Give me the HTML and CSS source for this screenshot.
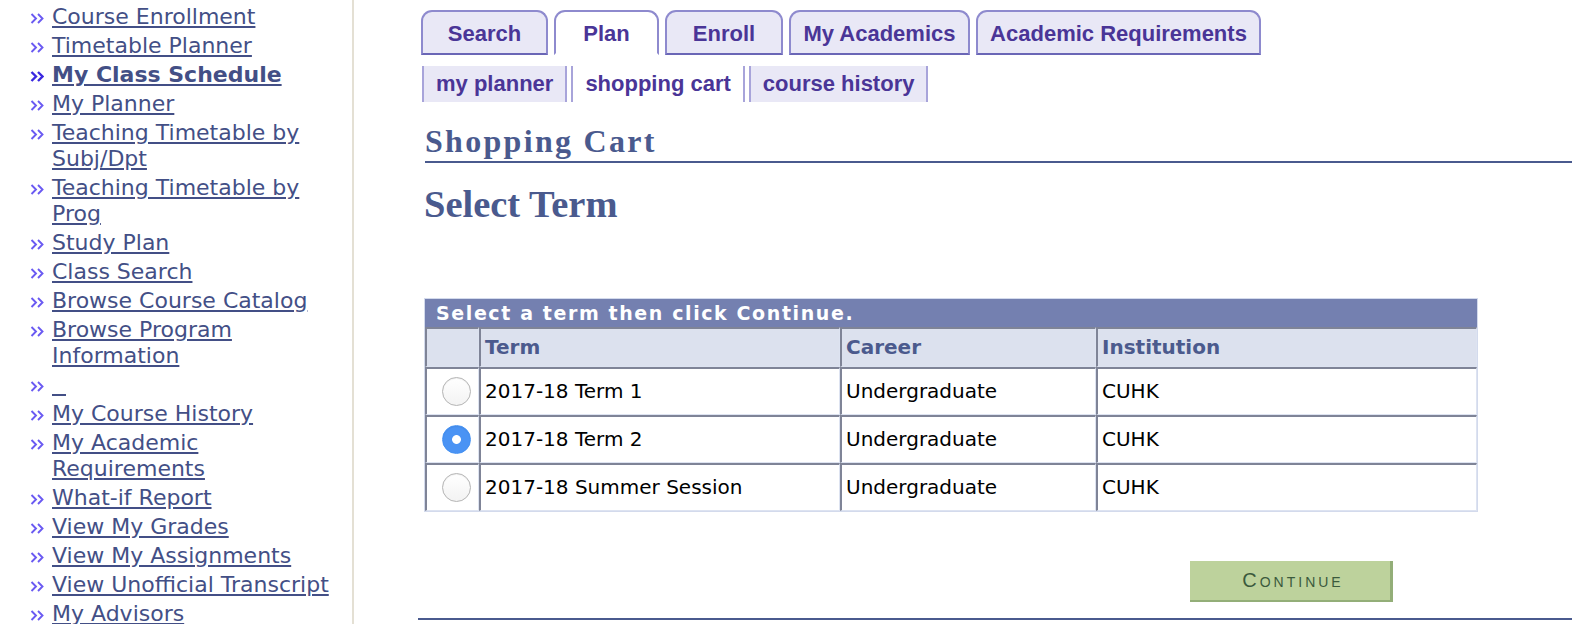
FILE: index.html
```html
<!DOCTYPE html>
<html lang="en">
<head>
<meta charset="utf-8">
<title>Shopping Cart - Select Term</title>
<link rel="stylesheet" href="styles.css">
</head>
<body>
<div class="page">
  <nav class="sidebar">
    <ul class="menu">
      <li class="menu-item"><svg class="chev" viewBox="0 0 14 12"><path d="M1.5 1.5 L6 6 L1.5 10.5 M8 1.5 L12.5 6 L8 10.5"/></svg><a href="#">Course Enrollment</a></li>
      <li class="menu-item"><svg class="chev" viewBox="0 0 14 12"><path d="M1.5 1.5 L6 6 L1.5 10.5 M8 1.5 L12.5 6 L8 10.5"/></svg><a href="#">Timetable Planner</a></li>
      <li class="menu-item current"><svg class="chev" viewBox="0 0 14 12"><path d="M1.5 1.5 L6 6 L1.5 10.5 M8 1.5 L12.5 6 L8 10.5"/></svg><a href="#">My Class Schedule</a></li>
      <li class="menu-item"><svg class="chev" viewBox="0 0 14 12"><path d="M1.5 1.5 L6 6 L1.5 10.5 M8 1.5 L12.5 6 L8 10.5"/></svg><a href="#">My Planner</a></li>
      <li class="menu-item"><svg class="chev" viewBox="0 0 14 12"><path d="M1.5 1.5 L6 6 L1.5 10.5 M8 1.5 L12.5 6 L8 10.5"/></svg><a href="#">Teaching Timetable by Subj/Dpt</a></li>
      <li class="menu-item"><svg class="chev" viewBox="0 0 14 12"><path d="M1.5 1.5 L6 6 L1.5 10.5 M8 1.5 L12.5 6 L8 10.5"/></svg><a href="#">Teaching Timetable by Prog</a></li>
      <li class="menu-item"><svg class="chev" viewBox="0 0 14 12"><path d="M1.5 1.5 L6 6 L1.5 10.5 M8 1.5 L12.5 6 L8 10.5"/></svg><a href="#">Study Plan</a></li>
      <li class="menu-item"><svg class="chev" viewBox="0 0 14 12"><path d="M1.5 1.5 L6 6 L1.5 10.5 M8 1.5 L12.5 6 L8 10.5"/></svg><a href="#">Class Search</a></li>
      <li class="menu-item"><svg class="chev" viewBox="0 0 14 12"><path d="M1.5 1.5 L6 6 L1.5 10.5 M8 1.5 L12.5 6 L8 10.5"/></svg><a href="#">Browse Course Catalog</a></li>
      <li class="menu-item"><svg class="chev" viewBox="0 0 14 12"><path d="M1.5 1.5 L6 6 L1.5 10.5 M8 1.5 L12.5 6 L8 10.5"/></svg><a href="#">Browse Program Information</a></li>
      <li class="menu-item"><svg class="chev" viewBox="0 0 14 12"><path d="M1.5 1.5 L6 6 L1.5 10.5 M8 1.5 L12.5 6 L8 10.5"/></svg><a href="#">&nbsp;&nbsp;</a></li>
      <li class="menu-item"><svg class="chev" viewBox="0 0 14 12"><path d="M1.5 1.5 L6 6 L1.5 10.5 M8 1.5 L12.5 6 L8 10.5"/></svg><a href="#">My Course History</a></li>
      <li class="menu-item"><svg class="chev" viewBox="0 0 14 12"><path d="M1.5 1.5 L6 6 L1.5 10.5 M8 1.5 L12.5 6 L8 10.5"/></svg><a href="#">My Academic Requirements</a></li>
      <li class="menu-item"><svg class="chev" viewBox="0 0 14 12"><path d="M1.5 1.5 L6 6 L1.5 10.5 M8 1.5 L12.5 6 L8 10.5"/></svg><a href="#">What-if Report</a></li>
      <li class="menu-item"><svg class="chev" viewBox="0 0 14 12"><path d="M1.5 1.5 L6 6 L1.5 10.5 M8 1.5 L12.5 6 L8 10.5"/></svg><a href="#">View My Grades</a></li>
      <li class="menu-item"><svg class="chev" viewBox="0 0 14 12"><path d="M1.5 1.5 L6 6 L1.5 10.5 M8 1.5 L12.5 6 L8 10.5"/></svg><a href="#">View My Assignments</a></li>
      <li class="menu-item"><svg class="chev" viewBox="0 0 14 12"><path d="M1.5 1.5 L6 6 L1.5 10.5 M8 1.5 L12.5 6 L8 10.5"/></svg><a href="#">View Unofficial Transcript</a></li>
      <li class="menu-item"><svg class="chev" viewBox="0 0 14 12"><path d="M1.5 1.5 L6 6 L1.5 10.5 M8 1.5 L12.5 6 L8 10.5"/></svg><a href="#">My Advisors</a></li>
    </ul>
  </nav>

  <main class="content">
    <div class="tabs">
      <a class="tab tab-search" href="#">Search</a>
      <a class="tab tab-plan active" href="#">Plan</a>
      <a class="tab tab-enroll" href="#">Enroll</a>
      <a class="tab tab-academics" href="#">My Academics</a>
      <a class="tab tab-reqs" href="#">Academic Requirements</a>
    </div>
    <div class="subtabs">
      <a class="subtab" href="#">my planner</a>
      <a class="subtab active" href="#">shopping cart</a>
      <a class="subtab" href="#">course history</a>
    </div>

    <h1 class="page-title">Shopping Cart</h1>
    <h2 class="section-title">Select Term</h2>

    <table class="term-grid">
      <colgroup>
        <col class="c-radio">
        <col class="c-term">
        <col class="c-career">
        <col class="c-inst">
      </colgroup>
      <thead>
        <tr class="grid-caption"><th colspan="4">Select a term then click Continue.</th></tr>
        <tr class="col-head">
          <th></th>
          <th>Term</th>
          <th>Career</th>
          <th>Institution</th>
        </tr>
      </thead>
      <tbody>
        <tr>
          <td class="radio-cell"><input class="radio" type="radio" name="term"></td>
          <td>2017-18 Term 1</td>
          <td>Undergraduate</td>
          <td>CUHK</td>
        </tr>
        <tr>
          <td class="radio-cell"><input class="radio" type="radio" name="term" checked></td>
          <td>2017-18 Term 2</td>
          <td>Undergraduate</td>
          <td>CUHK</td>
        </tr>
        <tr>
          <td class="radio-cell"><input class="radio" type="radio" name="term"></td>
          <td>2017-18 Summer Session</td>
          <td>Undergraduate</td>
          <td>CUHK</td>
        </tr>
      </tbody>
    </table>

    <button class="btn-continue" type="button">Continue</button>
    <div class="bottom-rule"></div>
  </main>
</div>
</body>
</html>
```

FILE: styles.css
```css
html, body {
  margin: 0;
  padding: 0;
  overflow: hidden;
  background: #ffffff;
  font-family: "DejaVu Sans", Verdana, sans-serif;
}

.page {
  display: flex;
  height: 624px;
}

/* ---------- sidebar ---------- */
.sidebar {
  width: 352px;
  flex: none;
  border-right: 2px solid #e4e0d4;
}

.menu {
  list-style: none;
  margin: 0;
  padding: 4px 10px 0 30px;
}

.menu-item {
  display: flex;
  align-items: flex-start;
  gap: 8px;
  margin-bottom: 3px;
  font-size: 22px;
  line-height: 26px;
}

.chev {
  width: 14px;
  height: 13px;
  flex: none;
  margin-top: 8px;
  fill: none;
  stroke: #6a5af2;
  stroke-width: 1.9;
}

.menu-item a {
  color: #434f86;
  text-decoration: underline;
}

.menu-item.current a {
  font-weight: bold;
}

.menu-item.current .chev {
  stroke: #3a28e0;
  stroke-width: 2.4;
}

/* ---------- content ---------- */
.content {
  flex: 1;
  min-width: 0;
  padding: 10px 0 0 64px;
}

.tabs {
  display: flex;
  align-items: flex-end;
  gap: 6px;
  margin-left: 3px;
}

.tab {
  box-sizing: border-box;
  display: block;
  height: 45px;
  padding-top: 3px;
  border: 2px solid #8e8ace;
  border-bottom-color: #6a66b6;
  border-radius: 11px 11px 0 0;
  background: #e9e8f6;
  color: #4a3597;
  font: bold 22px/38px "Liberation Sans", Arial, sans-serif;
  text-align: center;
  text-decoration: none;
}

.tab.active {
  background: #ffffff;
  border-bottom-color: #ffffff;
}

.tab-search { width: 127px; }
.tab-plan { width: 105px; }
.tab-enroll { width: 118px; }
.tab-academics { width: 181px; }
.tab-reqs { width: 285px; }

.subtabs {
  display: flex;
  gap: 4px;
  margin: 11px 0 0 4px;
}

.subtab {
  display: block;
  height: 36px;
  padding: 0 12px;
  border-left: 2px solid #a8a4da;
  border-right: 2px solid #a8a4da;
  background: #e9e8f6;
  color: #4a3597;
  font: bold 22px/35px "Liberation Sans", Arial, sans-serif;
  text-decoration: none;
}

.subtab.active {
  background: #ffffff;
}

.page-title {
  margin: 21px 0 0 7px;
  padding-bottom: 2px;
  border-bottom: 2px solid #4a5a8e;
  color: #4a5a8e;
  font: bold 32px/36px "Liberation Serif", "Times New Roman", serif;
  letter-spacing: 2.3px;
}

.section-title {
  margin: 19px 0 0 6px;
  color: #4a5a8e;
  font: bold 38.5px/44px "Liberation Serif", "Times New Roman", serif;
}

/* ---------- grid ---------- */
.term-grid {
  box-sizing: border-box;
  width: 1054px;
  margin: 72px 0 0 6px;
  border-collapse: separate;
  border-spacing: 0;
  border: 1px solid #d3daec;
  table-layout: fixed;
}

.c-radio { width: 54px; }
.c-term { width: 361px; }
.c-career { width: 256px; }
.c-inst { width: 381px; }

.grid-caption th {
  height: 28px;
  padding: 0 0 0 11px;
  background: #7480b0;
  color: #ffffff;
  font: bold 19px/28px "DejaVu Sans", Verdana, sans-serif;
  letter-spacing: 1.6px;
  text-align: left;
  white-space: nowrap;
}

.col-head th,
.term-grid td {
  box-sizing: border-box;
  border-top: 2px solid #7f8497;
  border-left: 2px solid #7f8497;
  border-right: 1px solid #dde3f1;
  border-bottom: 1px solid #dde3f1;
  text-align: left;
  font-size: 20px;
  line-height: 25px;
}

.col-head th {
  padding: 6px 4px;
  background: #dce1ee;
  color: #4b5a8d;
  font-weight: bold;
}

.term-grid td {
  padding: 10px 4px;
  color: #000000;
  white-space: nowrap;
}

.term-grid td.radio-cell {
  padding: 0 0 0 8px;
  text-align: center;
  vertical-align: middle;
}

.radio {
  appearance: none;
  -webkit-appearance: none;
  display: block;
  margin: 0 auto;
  width: 29px;
  height: 29px;
  border-radius: 50%;
  border: 1px solid #b4b4b4;
  background: linear-gradient(#ffffff, #f3f3f3);
  box-shadow: inset 0 1px 1px rgba(0, 0, 0, 0.06);
}

.radio:checked {
  border-color: #4390f2;
  background: radial-gradient(circle, #ffffff 0 4px, #4a93f4 4.8px);
}

/* ---------- actions ---------- */
.btn-continue {
  display: block;
  box-sizing: border-box;
  width: 203px;
  height: 41px;
  margin: 49px 0 0 772px;
  padding: 0 0 0 6px;
  border: none;
  border-right: 3px solid #93ae78;
  border-bottom: 2px solid #93ae78;
  background: #bdd29c;
  color: #3b5a3d;
  font: 20px "Liberation Sans", Arial, sans-serif;
  font-variant: small-caps;
  letter-spacing: 3px;
}

.bottom-rule {
  height: 2px;
  margin-top: 16px;
  background: #4a5a8e;
}
```
